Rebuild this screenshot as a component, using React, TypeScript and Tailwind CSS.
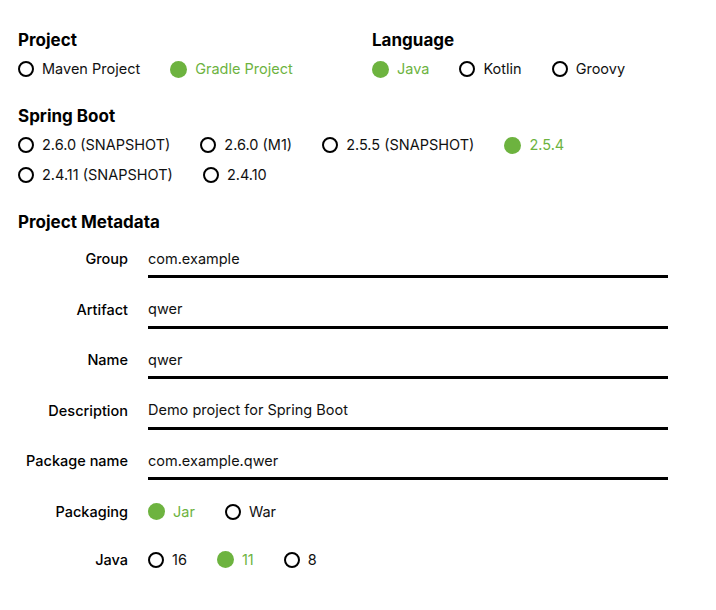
import { useState } from 'react';

type RadioProps = { label: string; checked: boolean; onClick: () => void };

const Radio = ({ label, checked, onClick }: RadioProps) => (
  <button type="button" onClick={onClick} className="flex items-center gap-[8px] h-[30px] cursor-pointer">
    {checked ? (
      <span className="block w-[17px] h-[17px] rounded-full bg-[#6db33f]" />
    ) : (
      <span className="block w-[16px] h-[16px] rounded-full border-2 border-black" />
    )}
    <span className={checked ? 'text-[#6db33f]' : 'text-[#111]'}>{label}</span>
  </button>
);

const RadioGroup = ({ options, value, onChange }: { options: string[]; value: string; onChange: (v: string) => void }) => (
  <div className="flex flex-wrap gap-x-[30px]">
    {options.map((o) => (
      <Radio key={o} label={o} checked={o === value} onClick={() => onChange(o)} />
    ))}
  </div>
);

const Field = ({ label, value }: { label: string; value: string }) => (
  <div className="flex items-start">
    <div className="w-[110px] text-right font-medium h-[31px] pt-[1px] leading-[30px] text-black">{label}</div>
    <div className="ml-[20px] w-[520px] border-b-[3px] border-black h-[35px] pt-[0.5px] leading-[30px] text-[#111]">{value}</div>
  </div>
);

export default function App() {
  const [project, setProject] = useState('Gradle Project');
  const [language, setLanguage] = useState('Java');
  const [boot, setBoot] = useState('2.5.4');
  const [packaging, setPackaging] = useState('Jar');
  const [java, setJava] = useState('11');

  return (
    <div className="bg-white w-[716px] h-[610px] px-[18px] pt-[29px] text-[14.5px]" style={{ fontFamily: 'Inter, "Liberation Sans", sans-serif' }}>
      {/* Project / Language */}
      <div className="flex">
        <div className="w-[354px]">
          <h2 className="text-[17px] font-bold leading-[22px] text-black">Project</h2>
          <div className="mt-[3px]">
            <RadioGroup options={['Maven Project', 'Gradle Project']} value={project} onChange={setProject} />
          </div>
        </div>
        <div>
          <h2 className="text-[17px] font-bold leading-[22px] text-black">Language</h2>
          <div className="mt-[3px]">
            <RadioGroup options={['Java', 'Kotlin', 'Groovy']} value={language} onChange={setLanguage} />
          </div>
        </div>
      </div>

      {/* Spring Boot */}
      <h2 className="mt-[21px] text-[17px] font-bold leading-[22px] text-black">Spring Boot</h2>
      <div className="mt-[3px] w-[560px]">
        <RadioGroup
          options={['2.6.0 (SNAPSHOT)', '2.6.0 (M1)', '2.5.5 (SNAPSHOT)', '2.5.4', '2.4.11 (SNAPSHOT)', '2.4.10']}
          value={boot}
          onChange={setBoot}
        />
      </div>

      {/* Project Metadata */}
      <h2 className="mt-[21px] text-[17px] font-bold leading-[22px] text-black">Project Metadata</h2>
      <div className="mt-[10px] flex flex-col gap-[15.5px]">
        <Field label="Group" value="com.example" />
        <Field label="Artifact" value="qwer" />
        <Field label="Name" value="qwer" />
        <Field label="Description" value="Demo project for Spring Boot" />
        <Field label="Package name" value="com.example.qwer" />
      </div>

      <div className="mt-[16.5px] flex items-center">
        <div className="w-[110px] text-right font-medium text-black">Packaging</div>
        <div className="ml-[20px]">
          <RadioGroup options={['Jar', 'War']} value={packaging} onChange={setPackaging} />
        </div>
      </div>
      <div className="mt-[18px] flex items-center">
        <div className="w-[110px] text-right font-medium text-black">Java</div>
        <div className="ml-[20px]">
          <RadioGroup options={['16', '11', '8']} value={java} onChange={setJava} />
        </div>
      </div>
    </div>
  );
}
